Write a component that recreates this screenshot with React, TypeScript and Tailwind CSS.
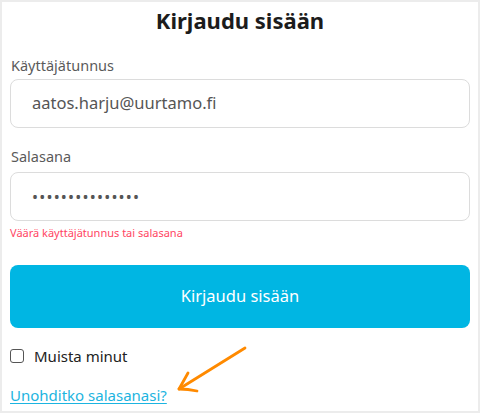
export default function App() {
  return (
    <main className="relative w-[480px] h-[413px] bg-white border-2 border-[#ececec] font-['Noto_Sans',sans-serif] overflow-hidden">
      <div className="px-2 flex flex-col">
        {/* Title */}
        <h1 className="text-center text-[22px] leading-[22px] font-bold text-[#1c1c1c] pt-[7px]">
          Kirjaudu sisään
        </h1>

        {/* Username */}
        <label className="mt-[24px] ml-px text-[14.5px] leading-5 text-[#5a5a5a]">
          Käyttäjätunnus
        </label>
        <div className="mt-[4px] h-[49px] rounded-lg border border-[#dcdcdc] flex items-center pl-[21px] text-[16.5px] text-[#555]">
          aatos.harju@uurtamo.fi
        </div>

        {/* Password */}
        <label className="mt-[18px] ml-px text-[14.5px] leading-5 text-[#5a5a5a]">
          Salasana
        </label>
        <div className="mt-[6px] h-[49px] rounded-lg border border-[#dcdcdc] flex items-center pl-[21px] text-[16px] tracking-[1.2px] text-[#555]">
          •••••••••••••••
        </div>
        <p className="mt-[4px] text-[11px] leading-4 text-[#ff4563]">
          Väärä käyttäjätunnus tai salasana
        </p>

        {/* Submit */}
        <button className="mt-[24px] h-[63px] rounded-lg bg-[#00b6e3] text-white text-[16.5px]">
          Kirjaudu sisään
        </button>

        {/* Remember */}
        <label className="mt-[18px] h-5 flex items-center gap-[10px] text-[15px] text-[#222]">
          <span className="w-[14px] h-[14px] rounded-[3px] border border-[#555] bg-white" />
          Muista minut
        </label>

        <a
          href="#"
          className="mt-[19px] self-start text-[15px] leading-5 text-[#1cb4e0] underline underline-offset-2"
        >
          Unohditko salasanasi?
        </a>
      </div>

      {/* Annotation arrow */}
      <svg
        className="absolute left-[168px] top-[338px]"
        width="84"
        height="58"
        viewBox="0 0 84 58"
        fill="none"
        stroke="#ff8a00"
        strokeWidth="2.8"
        strokeLinecap="round"
        strokeLinejoin="round"
      >
        <path d="M75 8 L9 49" />
        <path d="M18 33 Q13 42 9 49 Q18 49 27 51" />
      </svg>
    </main>
  );
}
